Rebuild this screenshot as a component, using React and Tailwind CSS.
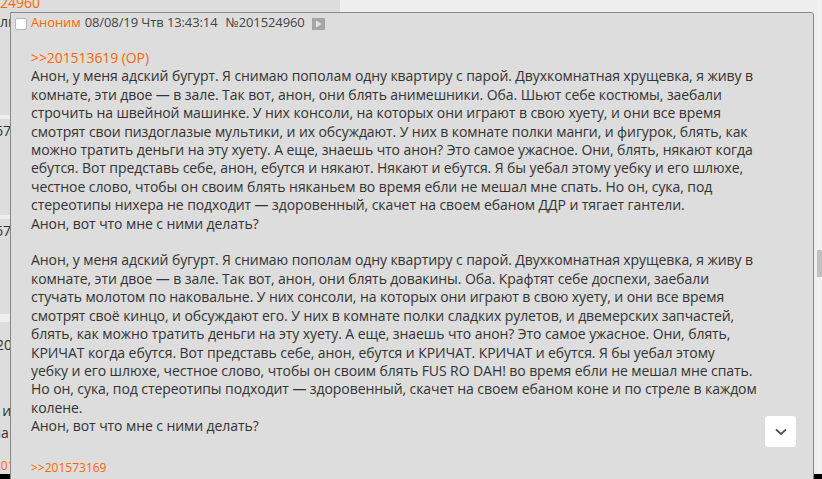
import React from "react";

const para1 = [
  "Анон, у меня адский бугурт. Я снимаю пополам одну квартиру с парой. Двухкомнатная хрущевка, я живу в",
  "комнате, эти двое — в зале. Так вот, анон, они блять анимешники. Оба. Шьют себе костюмы, заебали",
  "строчить на швейной машинке. У них консоли, на которых они играют в свою хуету, и они все время",
  "смотрят свои пиздоглазые мультики, и их обсуждают. У них в комнате полки манги, и фигурок, блять, как",
  "можно тратить деньги на эту хуету. А еще, знаешь что анон? Это самое ужасное. Они, блять, някают когда",
  "ебутся. Вот представь себе, анон, ебутся и някают. Някают и ебутся. Я бы уебал этому уебку и его шлюхе,",
  "честное слово, чтобы он своим блять няканьем во время ебли не мешал мне спать. Но он, сука, под",
  "стереотипы нихера не подходит — здоровенный, скачет на своем ебаном ДДР и тягает гантели.",
  "Анон, вот что мне с ними делать?",
];

const para2 = [
  "Анон, у меня адский бугурт. Я снимаю пополам одну квартиру с парой. Двухкомнатная хрущевка, я живу в",
  "комнате, эти двое — в зале. Так вот, анон, они блять довакины. Оба. Крафтят себе доспехи, заебали",
  "стучать молотом по наковальне. У них сонсоли, на которых они играют в свою хуету, и они все время",
  "смотрят своё кинцо, и обсуждают его. У них в комнате полки сладких рулетов, и двемерских запчастей,",
  "блять, как можно тратить деньги на эту хуету. А еще, знаешь что анон? Это самое ужасное. Они, блять,",
  "КРИЧАТ когда ебутся. Вот представь себе, анон, ебутся и КРИЧАТ. КРИЧАТ и ебутся. Я бы уебал этому",
  "уебку и его шлюхе, честное слово, чтобы он своим блять FUS RO DAH! во время ебли не мешал мне спать.",
  "Но он, сука, под стереотипы подходит — здоровенный, скачет на своем ебаном коне и по стреле в каждом",
  "колене.",
  "Анон, вот что мне с ними делать?",
];

// background posts peeking out on the left of the popup
function BgPost({ height, children }) {
  return (
    <div className="w-[800px] bg-[#dddddd] mb-[4px] overflow-hidden" style={{ height }}>
      {children}
    </div>
  );
}

export default function App() {
  return (
    <div
      className="w-[822px] h-[479px] flex flex-col overflow-hidden bg-[#eeeeee] text-[14px] text-[#333333]"
      style={{ fontFamily: '"Open Sans", "DejaVu Sans", sans-serif' }}
    >
      <div className="flex flex-1 min-h-0 relative">
        {/* page under the popup */}
        <div className="flex-1 flex flex-col">
          <div className="w-[340px] h-[117px] bg-[#dddddd] mb-[4px] overflow-hidden">
            <div className="text-[#ff6600] leading-[14px] -mt-[4px]">24960</div>
            <div className="mt-[3px] leading-[18px]">ль</div>
          </div>
          <BgPost height={97}>
            <div className="mt-[3px] -ml-[5px] leading-[18px]">67</div>
          </BgPost>
          <BgPost height={97}>
            <div className="mt-[3px] -ml-[5px] leading-[18px]">67</div>
          </BgPost>
          <div className="w-[800px] flex-1 bg-[#dddddd] mt-[4px] flex flex-col">
            <div className="mt-[14px] -ml-[4px] leading-[18px]">20</div>
            <div className="mt-[48px] -ml-[6px] leading-[18px]">- и</div>
            <div className="mt-[4px] -ml-[7px] leading-[18px]">ла</div>
            <div className="mt-[16px] -ml-[6px] leading-[16px] text-[12px] text-[#ff6600]">201</div>
          </div>
        </div>

        {/* scrollbar */}
        <div className="w-[5px] bg-[#f1f1f1] relative">
          <div className="absolute top-[250px] left-0 w-[5px] h-[27px] bg-[#c1c1c1]" />
        </div>

        {/* popup post */}
        <div className="absolute left-[10px] top-[12px] w-[804px] h-[480px] bg-[#dddddd] border border-[#888888] rounded-tr-[3px]">
          <div className="flex items-center h-[18px] leading-[18px] text-[13px] tracking-[-0.1px]">
            <span className="ml-[4px] w-[12px] h-[12px] mt-[4px] bg-white border border-[#b5b5b5] rounded-[2px]" />
            <span className="ml-[4px] text-[#ff6600]">Аноним</span>
            <span className="ml-[4px] text-[#444444]">08/08/19 Чтв 13:43:14</span>
            <span className="ml-[8px] text-[#444444]">№201524960</span>
            <span className="ml-[7px] mt-[3px] w-[13px] h-[12px] bg-[#a6a6a6] flex items-center justify-center">
              <svg width="7" height="8" viewBox="0 0 7 8">
                <path d="M1 0.5 L6.5 4 L1 7.5 Z" fill="#e6e6e6" />
              </svg>
            </span>
          </div>

          <div className="ml-[20px] mt-[18px] leading-[18.4px] tracking-[-0.08px] whitespace-nowrap">
            <div className="text-[#ff6600]">&gt;&gt;201513619 (OP)</div>
            {para1.map((l, i) => (
              <div key={"a" + i}>{l}</div>
            ))}
            <div>&nbsp;</div>
            {para2.map((l, i) => (
              <div key={"b" + i}>{l}</div>
            ))}
            <div className="mt-[24px] text-[12px] leading-[16px] text-[#ff6600] tracking-normal">&gt;&gt;201573169</div>
          </div>

          <button className="absolute left-[754px] top-[403px] w-[31px] h-[31px] bg-white rounded-[3px] flex items-center justify-center">
            <svg width="12" height="8" viewBox="0 0 12 8">
              <path d="M1 1.5 L6 6 L11 1.5" fill="none" stroke="#555555" strokeWidth="1.8" />
            </svg>
          </button>
        </div>
      </div>
      <div className="h-[5px] bg-black" />
    </div>
  );
}
